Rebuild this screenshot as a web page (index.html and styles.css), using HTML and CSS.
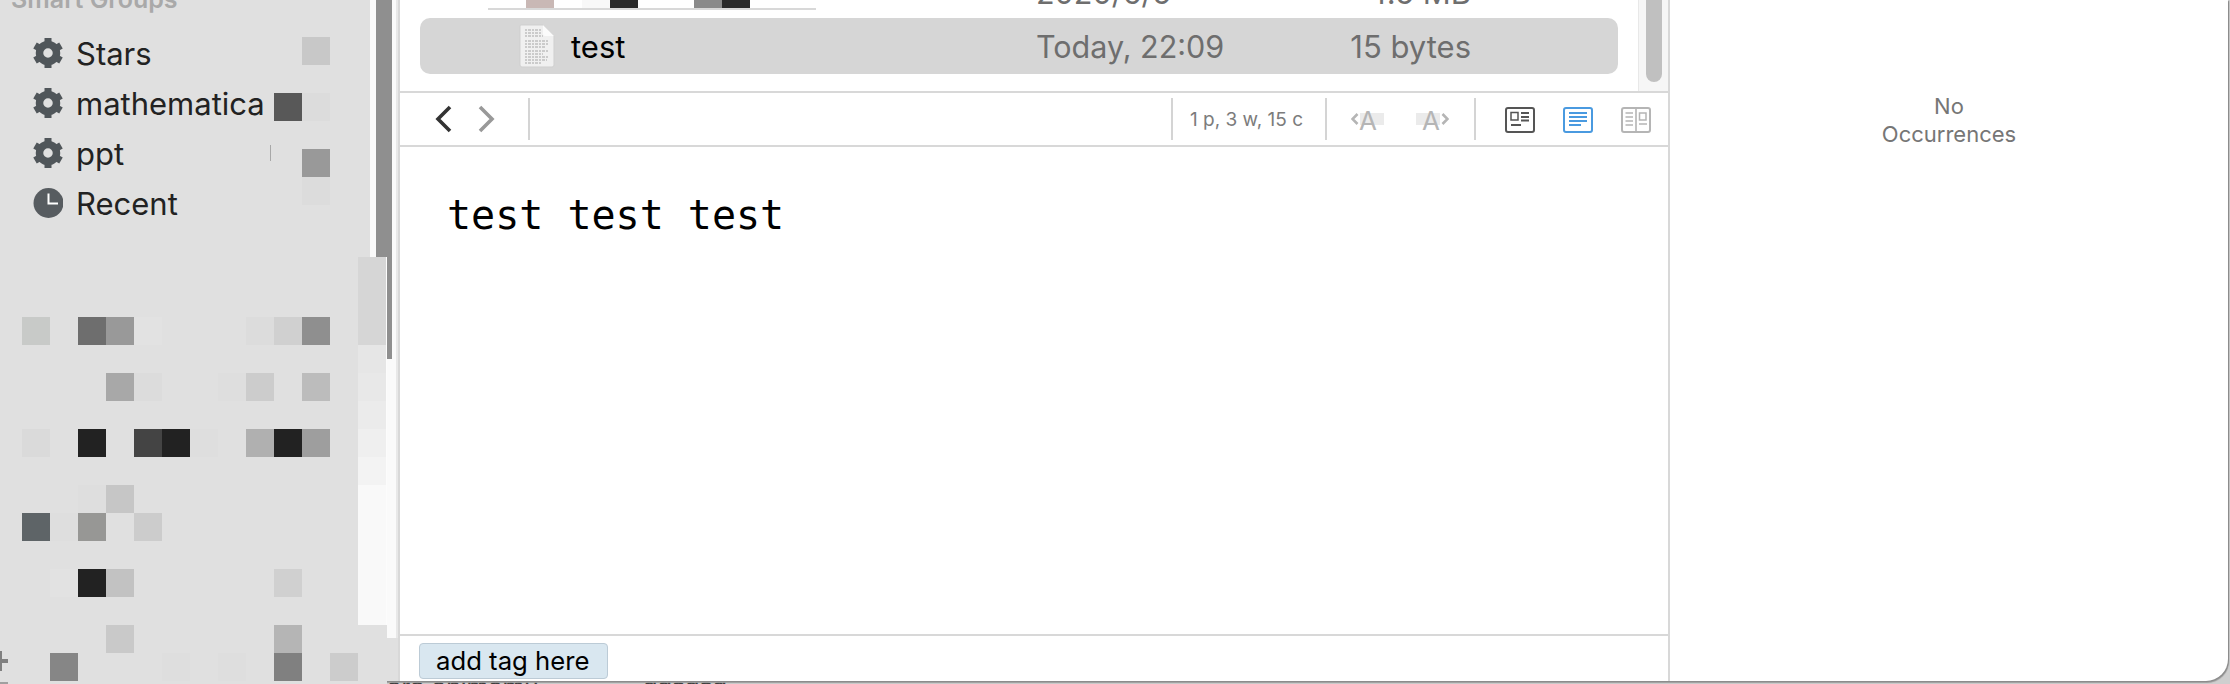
FILE: index.html
```html
<!DOCTYPE html>
<html lang="en">
<head>
<meta charset="utf-8">
<title>Notes</title>
<link rel="stylesheet" href="styles.css">
</head>
<body>
<svg width="0" height="0" class="defs" aria-hidden="true">
  <symbol id="gear" viewBox="0 0 30 30">
    <circle cx="15" cy="15" r="8.5" fill="none" stroke="#50565a" stroke-width="7.5"/>
    <g fill="#50565a">
      <rect x="11.5" y="0" width="7" height="6"/>
      <rect x="11.5" y="0" width="7" height="6" transform="rotate(60 15 15)"/>
      <rect x="11.5" y="0" width="7" height="6" transform="rotate(120 15 15)"/>
      <rect x="11.5" y="0" width="7" height="6" transform="rotate(180 15 15)"/>
      <rect x="11.5" y="0" width="7" height="6" transform="rotate(240 15 15)"/>
      <rect x="11.5" y="0" width="7" height="6" transform="rotate(300 15 15)"/>
    </g>
  </symbol>
</svg>

<div class="backdrop">
  <span class="behind behind-a">aro animamu</span>
  <span class="behind behind-b">qdsdsd</span>
</div>

<div class="window">
  <aside class="sidebar">
    <div class="sidebar-head">Smart Groups</div>
    <ul class="groups">
      <li class="group"><svg class="group-icon"><use href="#gear"/></svg><span>Stars</span></li>
      <li class="group"><svg class="group-icon"><use href="#gear"/></svg><span>mathematica</span></li>
      <li class="group"><svg class="group-icon"><use href="#gear"/></svg><span>ppt</span></li>
      <li class="group">
        <svg class="group-icon" viewBox="0 0 30 30"><circle cx="15.5" cy="15" r="15" fill="#575c60"/><path d="M15.5 5.500V15.500H25" fill="none" stroke="#fff" stroke-width="2"/></svg>
        <span>Recent</span>
      </li>
    </ul>
    <div class="side-scroll"><div class="side-thumb"></div></div>
    <svg class="mosaic" width="400" height="684" viewBox="0 0 400 684" aria-hidden="true" shape-rendering="crispEdges">
      <rect x="0" y="681" width="387" height="3" fill="#e0e0e0"/>
      <rect x="370" y="625" width="17" height="14" fill="#e0e0e0"/>
      <rect x="386" y="257" width="1" height="368" fill="#fcfcfc"/>
      <g>
        <rect x="358" y="257" width="28" height="88" fill="#d6d6d6"/>
        <rect x="358" y="345" width="28" height="28" fill="#e6e6e6"/>
        <rect x="358" y="373" width="28" height="28" fill="#e8e8e8"/>
        <rect x="358" y="401" width="28" height="28" fill="#ebebeb"/>
        <rect x="358" y="429" width="28" height="28" fill="#efefef"/>
        <rect x="358" y="457" width="28" height="28" fill="#f3f3f3"/>
        <rect x="358" y="485" width="28" height="140" fill="#f9f9f9"/>
      </g>
      <rect x="302" y="37" width="28" height="28" fill="#c8c8c8"/>
      <rect x="274" y="93" width="28" height="28" fill="#585858"/>
      <rect x="302" y="93" width="28" height="28" fill="#dcdcdc"/>
      <rect x="270" y="145" width="1" height="16" fill="#a8a8a8"/>
      <rect x="302" y="149" width="28" height="28" fill="#999999"/>
      <rect x="302" y="177" width="28" height="28" fill="#dcdcdc"/>
      <rect x="22" y="317" width="28" height="28" fill="#c8cac8"/>
      <rect x="78" y="317" width="28" height="28" fill="#6e6e6e"/>
      <rect x="106" y="317" width="28" height="28" fill="#999999"/>
      <rect x="134" y="317" width="28" height="28" fill="#e2e2e2"/>
      <rect x="246" y="317" width="28" height="28" fill="#dcdcdc"/>
      <rect x="274" y="317" width="28" height="28" fill="#d0d0d0"/>
      <rect x="302" y="317" width="28" height="28" fill="#8f8f8f"/>
      <rect x="106" y="373" width="28" height="28" fill="#a8a8a8"/>
      <rect x="134" y="373" width="28" height="28" fill="#dcdcdc"/>
      <rect x="218" y="373" width="28" height="28" fill="#dedede"/>
      <rect x="246" y="373" width="28" height="28" fill="#cccccc"/>
      <rect x="302" y="373" width="28" height="28" fill="#bcbcbc"/>
      <rect x="22" y="429" width="28" height="28" fill="#dadada"/>
      <rect x="78" y="429" width="28" height="28" fill="#222222"/>
      <rect x="134" y="429" width="28" height="28" fill="#444444"/>
      <rect x="162" y="429" width="28" height="28" fill="#222222"/>
      <rect x="190" y="429" width="28" height="28" fill="#dedede"/>
      <rect x="246" y="429" width="28" height="28" fill="#b0b0b0"/>
      <rect x="274" y="429" width="28" height="28" fill="#222222"/>
      <rect x="302" y="429" width="28" height="28" fill="#9e9e9e"/>
      <rect x="78" y="485" width="28" height="28" fill="#dedede"/>
      <rect x="106" y="485" width="28" height="28" fill="#c6c6c6"/>
      <rect x="22" y="513" width="28" height="28" fill="#5e6467"/>
      <rect x="50" y="513" width="28" height="28" fill="#dedede"/>
      <rect x="78" y="513" width="28" height="28" fill="#979795"/>
      <rect x="134" y="513" width="28" height="28" fill="#cccccc"/>
      <rect x="50" y="569" width="28" height="28" fill="#e2e2e2"/>
      <rect x="78" y="569" width="28" height="28" fill="#222222"/>
      <rect x="106" y="569" width="28" height="28" fill="#c2c2c2"/>
      <rect x="274" y="569" width="28" height="28" fill="#d0d0d0"/>
      <rect x="106" y="625" width="28" height="28" fill="#c9c9c9"/>
      <rect x="274" y="625" width="28" height="28" fill="#b5b5b5"/>
      <rect x="50" y="653" width="28" height="28" fill="#868686"/>
      <rect x="162" y="653" width="28" height="28" fill="#dedede"/>
      <rect x="218" y="653" width="28" height="28" fill="#dedede"/>
      <rect x="274" y="653" width="28" height="28" fill="#808080"/>
      <rect x="330" y="653" width="28" height="28" fill="#cccccc"/>
      <path d="M0 651H2V659H8V663H2V671H0Z" fill="#808080"/>
      <rect x="0" y="682" width="8" height="2" fill="#a0a0a0"/>
    </svg>
  </aside>

  <main class="main">
    <section class="list">
      <div class="list-rows">
        <div class="thumbs" aria-hidden="true">
          <i class="thumb thumb-rose"></i><i class="thumb thumb-gap"></i><i class="thumb thumb-pale"></i><i class="thumb thumb-ink"></i><i class="thumb thumb-gap2"></i><i class="thumb thumb-mid"></i><i class="thumb thumb-ink"></i>
        </div>
        <div class="row row-partial">
          <span class="cell-icon"></span><span class="cell-name"></span>
          <span class="cell-date">2020/6/5</span><span class="cell-size">4.5 MB</span>
        </div>
        <div class="row row-selected">
          <span class="cell-icon">
            <svg class="doc" width="36" height="44" viewBox="0 0 36 44">
              <path d="M2 1H24L35 12V41Q35 43 33 43H3Q1 43 1 41V2Q1 1 2 1Z" fill="#f0f0f0" stroke="#cfcfcf"/>
              <path d="M24 1L35 12H26Q24 12 24 10Z" fill="#fbfbfb"/>
              <g stroke="#a6a6a6" stroke-width="1.200" stroke-dasharray="2 1 3 1">
                <path d="M6 6H22M6 9H22M6 12H24"/>
                <path d="M6 17H29M6 20H29M6 23H27"/>
                <path d="M6 27H30M6 30H24"/>
                <path d="M6 33H29M6 36H28M6 39H23"/>
              </g>
            </svg>
          </span>
          <span class="cell-name">test</span>
          <span class="cell-date">Today, 22:09</span>
          <span class="cell-size">15 bytes</span>
        </div>
      </div>
      <div class="list-scroll"><div class="list-thumb"></div></div>
    </section>

    <div class="toolbar">
      <div class="nav">
        <svg width="18" height="28" viewBox="0 0 18 28"><path d="M15 2L3 14L15 26" fill="none" stroke="#333" stroke-width="3.600"/></svg>
        <svg width="18" height="28" viewBox="0 0 18 28"><path d="M3 2L15 14L3 26" fill="none" stroke="#999" stroke-width="3.600"/></svg>
      </div>
      <span class="sep"></span>
      <span class="tool-space"></span>
      <span class="sep"></span>
      <span class="count">1 p, 3 w, 15 c</span>
      <span class="sep"></span>
      <div class="fonts">
        <svg width="34" height="26" viewBox="0 0 34 26"><rect x="9" y="7" width="24" height="12" fill="#ebebeb"/><path d="M6.500 8L1.500 13L6.500 18" fill="none" stroke="#b5b5b5" stroke-width="2.600"/><text x="8" y="24" class="font-a">A</text></svg>
        <svg width="34" height="26" viewBox="0 0 34 26"><rect x="1" y="7" width="24" height="12" fill="#ebebeb"/><path d="M27.500 8L32.500 13L27.500 18" fill="none" stroke="#b5b5b5" stroke-width="2.600"/><text x="7" y="24" class="font-a">A</text></svg>
      </div>
      <span class="sep"></span>
      <div class="views">
        <svg width="30" height="26" viewBox="0 0 30 26"><rect x="1" y="1" width="28" height="24" rx="2" fill="none" stroke="#555" stroke-width="2"/><path d="M6 5.500H13V13H6Z" fill="none" stroke="#555" stroke-width="1.500"/><path d="M16 6H24M16 10H24M16 13.500H24M6 18H16" stroke="#555" stroke-width="1.800"/></svg>
        <svg width="30" height="26" viewBox="0 0 30 26"><rect x="1" y="1" width="28" height="24" rx="2" fill="none" stroke="#4a9ae0" stroke-width="2"/><path d="M6 6H24M6 10H24M6 14H24M6 18H18" stroke="#4a9ae0" stroke-width="2"/></svg>
        <svg width="30" height="26" viewBox="0 0 30 26"><rect x="1" y="1" width="28" height="24" rx="2" fill="none" stroke="#b5b5b5" stroke-width="2"/><path d="M15 1V25M4.500 6H12M4.500 10H12M4.500 14H12M4.500 18H12M18 17H26" stroke="#b5b5b5" stroke-width="1.600" fill="none"/><path d="M18.500 6H25V13H18.500Z" fill="none" stroke="#b5b5b5" stroke-width="1.500"/></svg>
      </div>
    </div>

    <div class="editor">test test test</div>

    <div class="tagbar"><span class="tag">add tag here</span></div>
  </main>

  <aside class="inspector">
    <p class="empty">No<br>Occurrences</p>
  </aside>
</div>
</body>
</html>
```
FILE: styles.css
```css
* { box-sizing: border-box; }
html, body { margin: 0; padding: 0; }
body {
  position: relative;
  width: 2230px;
  height: 684px;
  overflow: hidden;
  background: #cfcfcf;
  font-family: "Inter", "Liberation Sans", sans-serif;
}
.defs { position: absolute; }

.backdrop { position: absolute; inset: 0; }
.behind {
  position: absolute;
  top: 672px;
  font-family: "Liberation Sans", sans-serif;
  font-size: 26px;
  line-height: 30px;
  color: #333;
}
.behind-a { left: 387px; }
.behind-b { left: 643px; }

.window {
  position: relative;
  display: flex;
  width: 2228px;
  height: 681px;
  border-radius: 0 0 22px 0;
  box-shadow: 1px 1px 1px #8a8a8a, 1px 2px 1px #a0a0a0;
  background: #fff;
}

/* Sidebar */
.sidebar {
  position: relative;
  flex: 0 0 400px;
  background: #e0e0e0;
  border-right: 2px solid #d8d8d8;
}
.sidebar-head {
  margin-top: -16px;
  padding-left: 11px;
  height: 44px;
  font-size: 25px;
  line-height: 30px;
  font-weight: 600;
  color: #a9a9a9;
}
.groups { list-style: none; margin: 0; padding: 0; }
.group {
  display: flex;
  align-items: center;
  gap: 13px;
  height: 50px;
  padding-left: 33px;
  font-size: 31px;
  color: #222;
}
.group-icon { flex: 0 0 30px; width: 30px; height: 30px; }

.side-scroll {
  position: absolute;
  left: 370px;
  top: 0;
  width: 28px;
  height: 638px;
  background: #fafafa;
  border-right: 2px solid #e8e8e8;
}
.side-thumb {
  margin-left: 6px;
  width: 16px;
  height: 359px;
  background: #8f8f8f;
  border-bottom-left-radius: 5px;
}
.mosaic { position: absolute; left: 0; top: 0; }

/* Main column */
.main {
  flex: 0 0 1270px;
  display: flex;
  flex-direction: column;
  border-right: 2px solid #d8d8d8;
}
.list {
  position: relative;
  display: flex;
  flex: 0 0 93px;
  border-bottom: 2px solid #d8d8d8;
  overflow: hidden;
}
.list-rows { flex: 1; padding: 0 20px; position: relative; }
.thumbs {
  position: absolute;
  left: 88px;
  top: 0;
  width: 328px;
  height: 10px;
  display: flex;
  align-items: flex-start;
  border-bottom: 2px solid #d8d8d8;
}
.thumb { display: block; height: 8px; flex: 0 0 28px; }
.thumb-rose { margin-left: 38px; background: #c9b8b5; }
.thumb-gap { flex-basis: 28px; }
.thumb-pale { background: #f8f8f8; }
.thumb-ink { background: #2a2a2a; }
.thumb-gap2 { flex-basis: 56px; }
.thumb-mid { background: #8a8a8a; }

.row {
  display: grid;
  grid-template-columns: 101px 50px 465px 200px 235px;
  align-items: center;
  height: 56px;
  font-size: 31px;
}
.row-partial { margin-top: -36px; margin-bottom: -2px; height: 56px; }
.row-selected {
  background: #d6d6d6;
  border-radius: 10px;
  margin-top: 0;
}
.cell-icon { grid-column: 2; display: flex; }
.row .cell-icon:empty { visibility: hidden; }
.cell-name { color: #000; }
.cell-date { color: #6e6e6e; font-size: 30.5px; }
.cell-size { color: #6e6e6e; text-align: right; }
.doc { margin-left: -2px; }

.list-scroll {
  flex: 0 0 30px;
  background: #f6f6f6;
  border-left: 1px solid #e8e8e8;
}
.list-thumb {
  margin-left: 7px;
  width: 16px;
  height: 82px;
  background: #c0c0c0;
  border-radius: 0 0 8px 8px;
}

/* Toolbar */
.toolbar {
  display: flex;
  align-items: center;
  flex: 0 0 54px;
  border-bottom: 2px solid #d8d8d8;
}
.sep { flex: 0 0 2px; height: 42px; background: #d4d4d4; }
.nav { flex: 0 0 128px; display: flex; gap: 24px; padding-left: 35px; }
.tool-space { flex: 1; }
.count {
  flex: 0 0 152px;
  padding-right: 5px;
  text-align: center;
  font-size: 19px;
  color: #7c7c7c;
}
.fonts { flex: 0 0 147px; display: flex; gap: 30px; padding-left: 24px; }
.font-a { font-family: "Inter", "Liberation Sans", sans-serif; font-size: 26px; fill: #b5b5b5; }
.views { flex: 0 0 192px; display: flex; gap: 28px; padding-left: 29px; padding-top: 2px; }

/* Editor */
.editor {
  flex: 1;
  padding: 44px 0 0 47px;
  font-family: "DejaVu Sans Mono", monospace;
  font-size: 40px;
  line-height: 48px;
  color: #000;
}
.tagbar {
  flex: 0 0 47px;
  border-top: 2px solid #d8d8d8;
  padding: 7px 0 0 19px;
}
.tag {
  display: block;
  width: 189px;
  height: 36px;
  padding-left: 16px;
  background: #d9e7f0;
  border: 1px solid #bccbd6;
  border-radius: 4px;
  font-size: 25.7px;
  line-height: 33px;
  color: #000;
}

/* Inspector */
.inspector {
  flex: 1;
  border-radius: 0 0 22px 0;
  padding-top: 92px;
}
.empty {
  margin: 0;
  text-align: center;
  font-size: 22px;
  line-height: 28px;
  color: #767676;
}
```
